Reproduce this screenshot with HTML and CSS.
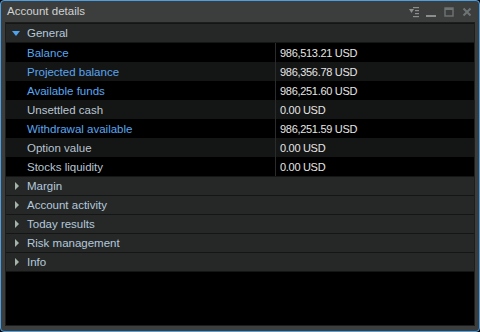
FILE: index.html
```html
<!DOCTYPE html>
<html>
<head>
<meta charset="utf-8">
<link rel="stylesheet" href="styles.css">
</head>
<body>
<div class="window">
  <div class="titlebar">
    <span class="title">Account details</span>
    <div class="controls">
      <svg class="ctl" width="11" height="12" viewBox="0 0 11 12"><path d="M1 3h5l-2.5 4z" fill="#8a8e8e"/><rect x="5" y="1" width="6" height="1.2" fill="#8a8e8e"/><rect x="7" y="4" width="4" height="1.2" fill="#8a8e8e"/><rect x="7" y="7" width="4" height="1.2" fill="#8a8e8e"/><rect x="5" y="10" width="6" height="1.2" fill="#8a8e8e"/></svg>
      <svg class="ctl" width="12" height="12" viewBox="0 0 12 12"><rect x="1" y="9" width="10" height="2" fill="#8a8e8e"/></svg>
      <svg class="ctl" width="12" height="12" viewBox="0 0 12 12"><rect x="2" y="2" width="8" height="8" fill="none" stroke="#6e7474" stroke-width="1.4"/><rect x="2" y="2" width="8" height="2" fill="#6e7474"/></svg>
      <svg class="ctl" width="12" height="12" viewBox="0 0 12 12"><path d="M2.5 2.5l7 7M9.5 2.5l-7 7" stroke="#6e7474" stroke-width="2"/></svg>
    </div>
  </div>
  <div class="panel">
    <div class="group open">
      <div class="ghead"><span class="tri-down"></span>General</div>
      <div class="row"><span class="lbl blue">Balance</span><span class="val">986,513.21 USD</span></div>
      <div class="row alt"><span class="lbl blue">Projected balance</span><span class="val">986,356.78 USD</span></div>
      <div class="row"><span class="lbl blue">Available funds</span><span class="val">986,251.60 USD</span></div>
      <div class="row alt"><span class="lbl">Unsettled cash</span><span class="val">0.00 USD</span></div>
      <div class="row"><span class="lbl blue">Withdrawal available</span><span class="val">986,251.59 USD</span></div>
      <div class="row alt"><span class="lbl">Option value</span><span class="val">0.00 USD</span></div>
      <div class="row"><span class="lbl">Stocks liquidity</span><span class="val">0.00 USD</span></div>
    </div>
    <div class="ghead closed"><span class="tri-right"></span>Margin</div>
    <div class="ghead closed"><span class="tri-right"></span>Account activity</div>
    <div class="ghead closed"><span class="tri-right"></span>Today results</div>
    <div class="ghead closed"><span class="tri-right"></span>Risk management</div>
    <div class="ghead closed last"><span class="tri-right"></span>Info</div>
  </div>
</div>
</body>
</html>
```
FILE: styles.css
```css
html, body {
  margin: 0;
  padding: 0;
  background: #000;
}
body {
  font-family: "Liberation Sans", Arial, sans-serif;
  font-size: 11.5px;
}
.window {
  width: 480px;
  height: 332px;
  box-sizing: border-box;
  border: 1px solid #4d9fe4;
  border-radius: 4px;
  background: #3c3d3d;
  padding: 0 4px 5px 4px;
  display: flex;
  flex-direction: column;
}
.titlebar {
  height: 21px;
  display: flex;
  align-items: center;
  justify-content: space-between;
  padding-left: 2px;
}
.title {
  color: #cfd2d2;
  font-size: 11.5px;
  margin-top: -2px;
}
.controls {
  display: flex;
  gap: 6px;
  align-items: center;
  padding-right: 2px;
}
.ctl {
  display: block;
}
.panel {
  flex: 1;
  border: 1px solid #1c1d1d;
  background: #000;
  display: flex;
  flex-direction: column;
}
.ghead {
  height: 18px;
  display: flex;
  align-items: center;
  background: #262828;
  border-top: 1px solid #141515;
  color: #b4c8dc;
  padding-left: 21px;
  position: relative;
}
.group.open .ghead {
  border-bottom: 1px solid #141515;
}
.ghead.last {
  border-bottom: 1px solid #141515;
}
.tri-down {
  position: absolute;
  left: 6px;
  top: 7px;
  width: 0;
  height: 0;
  border-left: 4.5px solid transparent;
  border-right: 4.5px solid transparent;
  border-top: 5px solid #4ea3ef;
}
.tri-right {
  position: absolute;
  left: 9px;
  top: 5px;
  width: 0;
  height: 0;
  border-top: 4px solid transparent;
  border-bottom: 4px solid transparent;
  border-left: 4px solid #a3b5a8;
}
.row {
  height: 19px;
  display: flex;
  align-items: center;
  background: #000;
}
.row.alt {
  background: #141515;
}
.lbl {
  width: 248px;
  padding-left: 21px;
  height: 100%;
  display: flex;
  align-items: center;
  border-right: 1px solid #2a2b2b;
  color: #b9c5d2;
}
.lbl.blue {
  color: #5aa6f0;
}
.val {
  padding-left: 4px;
  color: #e6e6e6;
  font-size: 11px;
  letter-spacing: -0.3px;
}
```
